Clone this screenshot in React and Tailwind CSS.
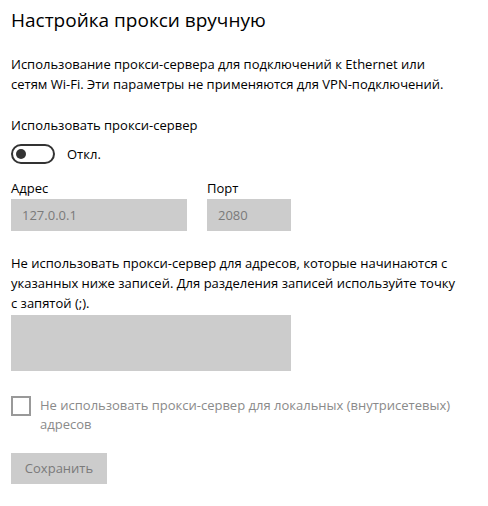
import React from 'react';

const App = () => {
  return (
    <div
      className="w-[488px] h-[506px] bg-white text-black pl-[11px] pr-4 pt-[6px]"
      style={{ fontFamily: '"Open Sans", "Noto Sans", sans-serif' }}
    >
      {/* Title */}
      <h1 className="text-[19px] leading-[28px] font-normal">Настройка прокси вручную</h1>

      <p className="mt-[20px] text-[13px] leading-[20px]">
        Использование прокси-сервера для подключений к Ethernet или
        <br />
        сетям Wi-Fi. Эти параметры не применяются для VPN-подключений.
      </p>

      {/* Toggle */}
      <div className="mt-[21px] text-[13px] leading-[20px]">Использовать прокси-сервер</div>
      <div className="mt-[9px] flex items-center gap-[12px]">
        <div className="w-[44px] h-[20px] rounded-full border-2 border-[#333333] flex items-center pl-[3px]">
          <div className="w-[10px] h-[10px] rounded-full bg-[#333333]" />
        </div>
        <span className="text-[13px] leading-[20px]">Откл.</span>
      </div>

      {/* Address / port */}
      <div className="mt-[14px] flex gap-[20px]">
        <div className="flex flex-col">
          <label className="text-[13px] leading-[20px]">Адрес</label>
          <div className="mt-[1px] w-[176px] h-[32px] bg-[#cccccc] text-[#7a7a7a] text-[13px] leading-[32px] px-[11px]">
            127.0.0.1
          </div>
        </div>
        <div className="flex flex-col">
          <label className="text-[13px] leading-[20px]">Порт</label>
          <div className="mt-[1px] w-[84px] h-[32px] bg-[#cccccc] text-[#7a7a7a] text-[13px] leading-[32px] px-[11px]">
            2080
          </div>
        </div>
      </div>

      <p className="mt-[22px] text-[13px] leading-[20px]">
        Не использовать прокси-сервер для адресов, которые начинаются с
        <br />
        указанных ниже записей. Для разделения записей используйте точку
        <br />
        с запятой (;).
      </p>
      <div className="mt-[2px] w-[280px] h-[56px] bg-[#cccccc]" />

      {/* Checkbox */}
      <div className="mt-[25px] flex items-start gap-[9px]">
        <div className="w-[20px] h-[20px] border-2 border-[#999999] shrink-0" />
        <span className="text-[13px] leading-[19px] text-[#8a8a8a]">
          Не использовать прокси-сервер для локальных (внутрисетевых)
          <br />
          адресов
        </span>
      </div>

      <button className="mt-[19px] w-[96px] h-[31px] bg-[#cccccc] text-[#7a7a7a] text-[13px] leading-[31px]">
        Сохранить
      </button>
    </div>
  );
};

export default App;
